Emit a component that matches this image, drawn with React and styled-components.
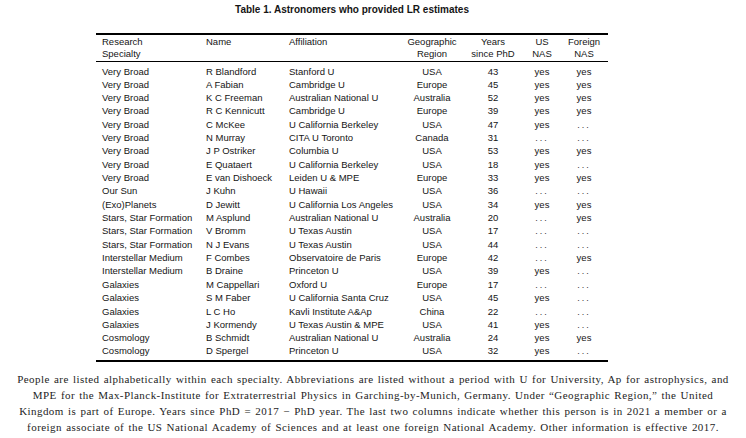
import React from 'react'
import styled, { createGlobalStyle } from 'styled-components'

const GlobalStyle = createGlobalStyle`
  html, body {
    margin: 0;
    padding: 0;
    background: #fff;
  }
`

const Page = styled.div`
  width: 746px;
  height: 438px;
  overflow: hidden;
  background: #fff;
  color: #151515;
  display: flex;
  flex-direction: column;
`

const TableBlock = styled.div`
  width: 512px;
  margin-left: 96px;
  padding-top: 4px;
  display: flex;
  flex-direction: column;
  align-items: center;
`

const Title = styled.div`
  font-family: 'Liberation Sans', Arial, sans-serif;
  font-weight: bold;
  font-size: 10px;
  line-height: 12px;
  margin-bottom: 17px;
`

const Table = styled.table`
  width: 512px;
  table-layout: fixed;
  border-collapse: collapse;
  font-family: 'Liberation Sans', Arial, sans-serif;
  font-size: 9.5px;
  border-top: 2px solid #000;
  border-bottom: 2px solid #000;
`

const HeadCell = styled.th`
  font-weight: normal;
  line-height: 12px;
  padding: 1px 0 1px ${(p) => (p.$center ? 0 : 6)}px;
  text-align: ${(p) => (p.$center ? 'center' : 'left')};
  vertical-align: top;
  border-bottom: 1.5px solid #000;
`

const Cell = styled.td`
  height: 13px;
  line-height: 12px;
  padding: 0 0 0 ${(p) => (p.$center ? 0 : 6)}px;
  text-align: ${(p) => (p.$center ? 'center' : 'left')};
  vertical-align: middle;
  white-space: nowrap;
`

const Row = styled.tr`
  height: 13.35px;
  &:first-child td {
    padding-top: 3px;
  }
  &:last-child td {
    padding-bottom: 2px;
  }
`

const Dots = styled.span`
  font-size: 9px;
  line-height: 10px;
  letter-spacing: 2px;
  color: #333;
`

const Caption = styled.p`
  margin: 9px 0 0;
  font-family: 'Liberation Serif', 'Times New Roman', serif;
  font-size: 11px;
  line-height: 16.2px;
  text-align: center;
  color: #1d1d1d;
  letter-spacing: 0.45px;
  word-spacing: 1px;
  white-space: nowrap;
`

const widths = [104, 83, 119, 60, 62, 36, 48]

const rows = [
  ['Very Broad', 'R Blandford', 'Stanford U', 'USA', 43, 'yes', 'yes'],
  ['Very Broad', 'A Fabian', 'Cambridge U', 'Europe', 45, 'yes', 'yes'],
  ['Very Broad', 'K C Freeman', 'Australian National U', 'Australia', 52, 'yes', 'yes'],
  ['Very Broad', 'R C Kennicutt', 'Cambridge U', 'Europe', 39, 'yes', 'yes'],
  ['Very Broad', 'C McKee', 'U California Berkeley', 'USA', 47, 'yes', null],
  ['Very Broad', 'N Murray', 'CITA U Toronto', 'Canada', 31, null, null],
  ['Very Broad', 'J P Ostriker', 'Columbia U', 'USA', 53, 'yes', 'yes'],
  ['Very Broad', 'E Quataert', 'U California Berkeley', 'USA', 18, 'yes', null],
  ['Very Broad', 'E van Dishoeck', 'Leiden U & MPE', 'Europe', 33, 'yes', 'yes'],
  ['Our Sun', 'J Kuhn', 'U Hawaii', 'USA', 36, null, null],
  ['(Exo)Planets', 'D Jewitt', 'U California Los Angeles', 'USA', 34, 'yes', 'yes'],
  ['Stars, Star Formation', 'M Asplund', 'Australian National U', 'Australia', 20, null, 'yes'],
  ['Stars, Star Formation', 'V Bromm', 'U Texas Austin', 'USA', 17, null, null],
  ['Stars, Star Formation', 'N J Evans', 'U Texas Austin', 'USA', 44, null, null],
  ['Interstellar Medium', 'F Combes', 'Observatoire de Paris', 'Europe', 42, null, 'yes'],
  ['Interstellar Medium', 'B Draine', 'Princeton U', 'USA', 39, 'yes', null],
  ['Galaxies', 'M Cappellari', 'Oxford U', 'Europe', 17, null, null],
  ['Galaxies', 'S M Faber', 'U California Santa Cruz', 'USA', 45, 'yes', null],
  ['Galaxies', 'L C Ho', 'Kavli Institute A&Ap', 'China', 22, null, null],
  ['Galaxies', 'J Kormendy', 'U Texas Austin & MPE', 'USA', 41, 'yes', null],
  ['Cosmology', 'B Schmidt', 'Australian National U', 'Australia', 24, 'yes', 'yes'],
  ['Cosmology', 'D Spergel', 'Princeton U', 'USA', 32, 'yes', null],
]

const captionLines = [
  'People are listed alphabetically within each specialty. Abbreviations are listed without a period with U for University, Ap for astrophysics, and',
  'MPE for the Max-Planck-Institute for Extraterrestrial Physics in Garching-by-Munich, Germany. Under “Geographic Region,” the United',
  'Kingdom is part of Europe. Years since PhD = 2017 − PhD year. The last two columns indicate whether this person is in 2021 a member or a',
  'foreign associate of the US National Academy of Sciences and at least one foreign National Academy. Other information is effective 2017.',
]

const Flag = ({ value }) => (value ? value : <Dots>...</Dots>)

const App = () => (
  <Page>
    <GlobalStyle />
    <TableBlock>
      <Title>Table 1. Astronomers who provided LR estimates</Title>
      <Table>
        <colgroup>
          {widths.map((w, i) => (
            <col key={i} style={{ width: w }} />
          ))}
        </colgroup>
        <thead>
          <tr>
            <HeadCell>
              Research
              <br />
              Specialty
            </HeadCell>
            <HeadCell>Name</HeadCell>
            <HeadCell>Affiliation</HeadCell>
            <HeadCell $center>
              Geographic
              <br />
              Region
            </HeadCell>
            <HeadCell $center>
              Years
              <br />
              since PhD
            </HeadCell>
            <HeadCell $center>
              US
              <br />
              NAS
            </HeadCell>
            <HeadCell $center>
              Foreign
              <br />
              NAS
            </HeadCell>
          </tr>
        </thead>
        <tbody>
          {rows.map(([spec, name, aff, region, years, us, foreign]) => (
            <Row key={name}>
              <Cell>{spec}</Cell>
              <Cell>{name}</Cell>
              <Cell>{aff}</Cell>
              <Cell $center>{region}</Cell>
              <Cell $center>{years}</Cell>
              <Cell $center>
                <Flag value={us} />
              </Cell>
              <Cell $center>
                <Flag value={foreign} />
              </Cell>
            </Row>
          ))}
        </tbody>
      </Table>
    </TableBlock>
    <Caption>
      {captionLines.map((line, i) => (
        <React.Fragment key={i}>
          {line}
          {i < captionLines.length - 1 && <br />}
        </React.Fragment>
      ))}
    </Caption>
  </Page>
)

export default App
